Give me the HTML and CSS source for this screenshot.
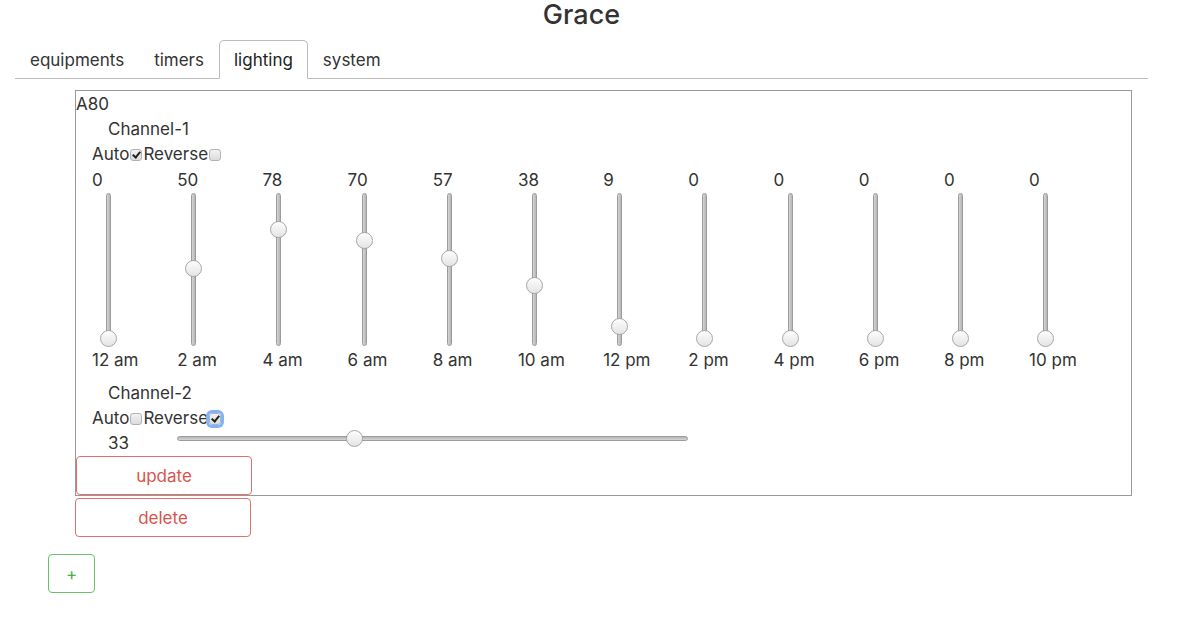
FILE: index.html
```html
<!DOCTYPE html>
<html lang="en">
<head>
    <meta charset="UTF-8">
    <meta name="viewport" content="width=device-width, initial-scale=1.0">
    <title>Grace</title>
    <link rel="stylesheet" href="styles.css">
</head>
<body>
    <div class="container">
        <h1 class="title">Grace</h1>
        <ul class="tabs">
            <li class="tab">equipments</li>
            <li class="tab">timers</li>
            <li class="tab active">lighting</li>
            <li class="tab">system</li>
        </ul>

        <div class="device">
            <div class="device-name">A80</div>

            <div class="channel">
                <div class="channel-name">Channel-1</div>
                <div class="channel-opts">Auto<span class="check checked"></span>Reverse<span class="check"></span></div>
                <div class="schedule">
                    <div class="point"><span class="point-value">0</span><div class="vslider"><div class="vtrack"></div><div class="thumb" style="bottom:1px"></div></div><span class="point-time">12 am</span></div>
                    <div class="point"><span class="point-value">50</span><div class="vslider"><div class="vtrack"></div><div class="thumb" style="bottom:71px"></div></div><span class="point-time">2 am</span></div>
                    <div class="point"><span class="point-value">78</span><div class="vslider"><div class="vtrack"></div><div class="thumb" style="bottom:110px"></div></div><span class="point-time">4 am</span></div>
                    <div class="point"><span class="point-value">70</span><div class="vslider"><div class="vtrack"></div><div class="thumb" style="bottom:99px"></div></div><span class="point-time">6 am</span></div>
                    <div class="point"><span class="point-value">57</span><div class="vslider"><div class="vtrack"></div><div class="thumb" style="bottom:81px"></div></div><span class="point-time">8 am</span></div>
                    <div class="point"><span class="point-value">38</span><div class="vslider"><div class="vtrack"></div><div class="thumb" style="bottom:54px"></div></div><span class="point-time">10 am</span></div>
                    <div class="point"><span class="point-value">9</span><div class="vslider"><div class="vtrack"></div><div class="thumb" style="bottom:13px"></div></div><span class="point-time">12 pm</span></div>
                    <div class="point"><span class="point-value">0</span><div class="vslider"><div class="vtrack"></div><div class="thumb" style="bottom:1px"></div></div><span class="point-time">2 pm</span></div>
                    <div class="point"><span class="point-value">0</span><div class="vslider"><div class="vtrack"></div><div class="thumb" style="bottom:1px"></div></div><span class="point-time">4 pm</span></div>
                    <div class="point"><span class="point-value">0</span><div class="vslider"><div class="vtrack"></div><div class="thumb" style="bottom:1px"></div></div><span class="point-time">6 pm</span></div>
                    <div class="point"><span class="point-value">0</span><div class="vslider"><div class="vtrack"></div><div class="thumb" style="bottom:1px"></div></div><span class="point-time">8 pm</span></div>
                    <div class="point"><span class="point-value">0</span><div class="vslider"><div class="vtrack"></div><div class="thumb" style="bottom:1px"></div></div><span class="point-time">10 pm</span></div>
                </div>
            </div>

            <div class="channel channel-second">
                <div class="channel-name">Channel-2</div>
                <div class="channel-opts">Auto<span class="check"></span>Reverse<span class="check checked focused"></span></div>
                <div class="fixed-row">
                    <span class="fixed-value">33</span>
                    <div class="hslider"><div class="htrack"></div><div class="thumb" style="left:169px"></div></div>
                </div>
            </div>

            <button class="btn btn-danger">update</button>
        </div>
        <button class="btn btn-danger btn-delete">delete</button>

        <button class="btn btn-success btn-add">+</button>
    </div>
</body>
</html>
```

FILE: styles.css
```css
body {
    margin: 0;
    font-family: Inter, "Liberation Sans", Arial, sans-serif;
    font-size: 17px;
    line-height: 25px;
    color: #333;
    background: #fff;
}
.container {
    width: 1133px;
    margin-left: 15px;
}
.title {
    margin: 0;
    height: 30px;
    font-size: 27px;
    line-height: 30px;
    font-weight: 500;
    text-align: center;
    color: #333;
}

/* tabs */
.tabs {
    display: flex;
    margin: 10px 0 0;
    padding: 0;
    list-style: none;
    border-bottom: 1px solid #bbb;
}
.tab {
    height: 37px;
    line-height: 39px;
    padding: 0 14px;
    margin-bottom: -1px;
    border: 1px solid transparent;
    border-radius: 5px 5px 0 0;
    color: #333;
    cursor: pointer;
}
.tab.active {
    background: #fff;
    border-color: #bbb;
    border-bottom-color: #fff;
    color: #222;
}

/* device card */
.device {
    width: 1055px;
    margin: 11px 0 0 60px;
    padding-top: 1px;
    border: 1px solid #999;
}
.channel-name {
    padding-left: 32px;
}
.channel-opts {
    display: flex;
    align-items: center;
    padding-left: 16px;
}
.channel-second {
    margin-top: 8px;
}
.check {
    position: relative;
    display: inline-block;
    box-sizing: border-box;
    width: 12px;
    height: 12px;
    margin: 1px 1px 0 1px;
    border: 1px solid #b3b3b3;
    border-radius: 3px;
    background: linear-gradient(#f2f2f2, #dcdcdc);
}
.check.checked::after {
    content: "";
    position: absolute;
    left: 3px;
    top: 0;
    width: 3px;
    height: 6px;
    border: solid #222;
    border-width: 0 2px 2px 0;
    transform: rotate(40deg);
}
.check.focused {
    box-shadow: 0 0 0 3px #80b3fb;
}

/* schedule of vertical sliders */
.schedule {
    display: flex;
    padding-left: 16px;
}
.point {
    display: flex;
    flex-direction: column;
    width: 85.2px;
    flex: none;
}
.point-value {
    line-height: 26px;
}
.vslider {
    position: relative;
    width: 32px;
    height: 155px;
}
.vtrack {
    position: absolute;
    left: 14px;
    top: 0;
    bottom: 2px;
    width: 5px;
    box-sizing: border-box;
    border: 1px solid #9c9c9c;
    border-radius: 3px;
    background: linear-gradient(90deg, #d6d6d6, #b4b4b4);
}
.vslider .thumb {
    left: 8px;
}
.thumb {
    position: absolute;
    box-sizing: border-box;
    width: 17px;
    height: 17px;
    border: 1px solid #a6a6a6;
    border-radius: 50%;
    background: linear-gradient(#fdfdfd, #e4e4e4);
}

/* single value row */
.fixed-row {
    display: flex;
    align-items: flex-start;
    padding-left: 32px;
}
.fixed-value {
    width: 69px;
}
.hslider {
    position: relative;
    width: 511px;
    height: 17px;
}
.htrack {
    position: absolute;
    left: 0;
    right: 0;
    top: 5px;
    height: 5px;
    box-sizing: border-box;
    border: 1px solid #9c9c9c;
    border-radius: 3px;
    background: linear-gradient(#b4b4b4, #d6d6d6);
}
.hslider .thumb {
    top: -1px;
}

/* buttons */
.btn {
    display: block;
    box-sizing: border-box;
    width: 176px;
    height: 39px;
    padding: 0;
    font-family: inherit;
    font-size: 17px;
    background: #fff;
    border: 1px solid;
    border-radius: 4px;
    cursor: pointer;
}
.btn-danger {
    color: #d9534f;
    border-color: #e0706d;
}
.btn-delete {
    margin: 2px 0 0 60px;
}
.btn-success {
    color: #4cae4c;
    border-color: #6cc06c;
}
.btn-add {
    width: 47px;
    margin: 17px 0 0 33px;
}
```
